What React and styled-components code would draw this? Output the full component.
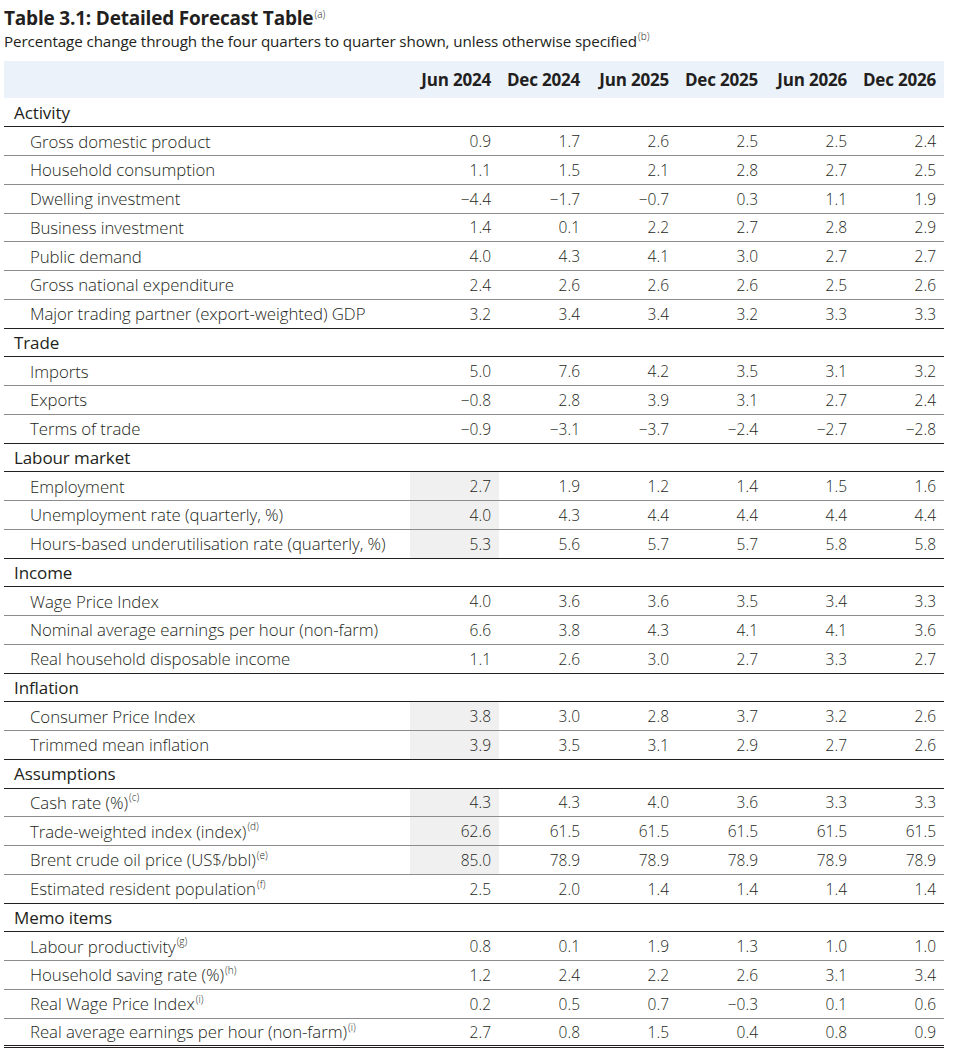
import React from "react";
import styled, { createGlobalStyle } from "styled-components";

const GlobalStyle = createGlobalStyle`
  body {
    margin: 0;
    background: #fff;
    font-family: "Open Sans", "Noto Sans", sans-serif;
    color: #231f20;
  }
`;

const Page = styled.div`
  padding: 5px 35px 0 4px;
`;

const Title = styled.h1`
  margin: 0;
  font-size: 19px;
  font-weight: 700;
  line-height: 26px;
  letter-spacing: -0.2px;
`;

const Subtitle = styled.p`
  margin: 0 0 10px;
  font-size: 15.2px;
  font-weight: 400;
  line-height: 20px;
  letter-spacing: -0.1px;
`;

const Note = styled.sup`
  font-size: 10px;
  font-weight: 300;
  line-height: 0;
  vertical-align: 0;
  position: relative;
  top: -0.75em;
  margin-left: 1px;
  letter-spacing: 0;
`;

const Grid = styled.table`
  width: 940px;
  border-collapse: collapse;
  table-layout: fixed;
`;

const HeadRow = styled.tr`
  background: #ebf2fa;
  height: 37px;
`;

const Th = styled.th`
  font-size: 17px;
  font-weight: 700;
  text-align: right;
  padding: 0 8px 0 0;
  letter-spacing: -0.2px;
  white-space: nowrap;
`;

const SectionRow = styled.tr`
  height: 28.75px;
  border-bottom: 1px solid #231f20;
`;

const SectionLabel = styled.td`
  font-size: 17px;
  font-weight: 400;
  padding: 0 0 0 10px;
  letter-spacing: -0.1px;
`;

const Row = styled.tr`
  height: 28.75px;
  border-bottom: ${(p) =>
    p.$last ? (p.$end ? "3px double #231f20" : "1px solid #231f20") : "1px solid #8c8c8c"};
`;

const Label = styled.td`
  font-size: 16.8px;
  font-weight: 300;
  padding: 0 0 0 26px;
  white-space: nowrap;
  letter-spacing: -0.05px;
`;

const Cell = styled.td`
  font-size: 15.5px;
  font-weight: 300;
  text-align: right;
  padding: 0 8px 0 0;
  background: ${(p) => (p.$shaded ? "#f0f0f0" : "transparent")};
`;

const columns = ["Jun 2024", "Dec 2024", "Jun 2025", "Dec 2025", "Jun 2026", "Dec 2026"];

const sections = [
  {
    name: "Activity",
    rows: [
      ["Gross domestic product", null, ["0.9", "1.7", "2.6", "2.5", "2.5", "2.4"]],
      ["Household consumption", null, ["1.1", "1.5", "2.1", "2.8", "2.7", "2.5"]],
      ["Dwelling investment", null, ["−4.4", "−1.7", "−0.7", "0.3", "1.1", "1.9"]],
      ["Business investment", null, ["1.4", "0.1", "2.2", "2.7", "2.8", "2.9"]],
      ["Public demand", null, ["4.0", "4.3", "4.1", "3.0", "2.7", "2.7"]],
      ["Gross national expenditure", null, ["2.4", "2.6", "2.6", "2.6", "2.5", "2.6"]],
      ["Major trading partner (export-weighted) GDP", null, ["3.2", "3.4", "3.4", "3.2", "3.3", "3.3"]],
    ],
  },
  {
    name: "Trade",
    rows: [
      ["Imports", null, ["5.0", "7.6", "4.2", "3.5", "3.1", "3.2"]],
      ["Exports", null, ["−0.8", "2.8", "3.9", "3.1", "2.7", "2.4"]],
      ["Terms of trade", null, ["−0.9", "−3.1", "−3.7", "−2.4", "−2.7", "−2.8"]],
    ],
  },
  {
    name: "Labour market",
    rows: [
      ["Employment", null, ["2.7", "1.9", "1.2", "1.4", "1.5", "1.6"], true],
      ["Unemployment rate (quarterly, %)", null, ["4.0", "4.3", "4.4", "4.4", "4.4", "4.4"], true],
      ["Hours-based underutilisation rate (quarterly, %)", null, ["5.3", "5.6", "5.7", "5.7", "5.8", "5.8"], true],
    ],
  },
  {
    name: "Income",
    rows: [
      ["Wage Price Index", null, ["4.0", "3.6", "3.6", "3.5", "3.4", "3.3"]],
      ["Nominal average earnings per hour (non-farm)", null, ["6.6", "3.8", "4.3", "4.1", "4.1", "3.6"]],
      ["Real household disposable income", null, ["1.1", "2.6", "3.0", "2.7", "3.3", "2.7"]],
    ],
  },
  {
    name: "Inflation",
    rows: [
      ["Consumer Price Index", null, ["3.8", "3.0", "2.8", "3.7", "3.2", "2.6"], true],
      ["Trimmed mean inflation", null, ["3.9", "3.5", "3.1", "2.9", "2.7", "2.6"], true],
    ],
  },
  {
    name: "Assumptions",
    rows: [
      ["Cash rate (%)", "c", ["4.3", "4.3", "4.0", "3.6", "3.3", "3.3"], true],
      ["Trade-weighted index (index)", "d", ["62.6", "61.5", "61.5", "61.5", "61.5", "61.5"], true],
      ["Brent crude oil price (US$/bbl)", "e", ["85.0", "78.9", "78.9", "78.9", "78.9", "78.9"], true],
      ["Estimated resident population", "f", ["2.5", "2.0", "1.4", "1.4", "1.4", "1.4"]],
    ],
  },
  {
    name: "Memo items",
    rows: [
      ["Labour productivity", "g", ["0.8", "0.1", "1.9", "1.3", "1.0", "1.0"]],
      ["Household saving rate (%)", "h", ["1.2", "2.4", "2.2", "2.6", "3.1", "3.4"]],
      ["Real Wage Price Index", "i", ["0.2", "0.5", "0.7", "−0.3", "0.1", "0.6"]],
      ["Real average earnings per hour (non-farm)", "i", ["2.7", "0.8", "1.5", "0.4", "0.8", "0.9"]],
    ],
  },
];

export default function App() {
  return (
    <Page>
      <GlobalStyle />
      <Title>
        Table 3.1: Detailed Forecast Table<Note>(a)</Note>
      </Title>
      <Subtitle>
        Percentage change through the four quarters to quarter shown, unless otherwise specified
        <Note>(b)</Note>
      </Subtitle>
      <Grid>
        <colgroup>
          <col style={{ width: 406 }} />
          {columns.map((c) => (
            <col key={c} style={{ width: 89 }} />
          ))}
        </colgroup>
        <thead>
          <HeadRow>
            <th />
            {columns.map((c) => (
              <Th key={c}>{c}</Th>
            ))}
          </HeadRow>
        </thead>
        <tbody>
          {sections.map((section, si) => (
            <React.Fragment key={section.name}>
              <SectionRow>
                <SectionLabel colSpan={7}>{section.name}</SectionLabel>
              </SectionRow>
              {section.rows.map(([label, note, values, shaded], ri) => (
                <Row
                  key={label}
                  $last={ri === section.rows.length - 1}
                  $end={si === sections.length - 1 && ri === section.rows.length - 1}
                >
                  <Label>
                    {label}
                    {note && <Note>({note})</Note>}
                  </Label>
                  {values.map((v, vi) => (
                    <Cell key={vi} $shaded={shaded && vi === 0}>
                      {v}
                    </Cell>
                  ))}
                </Row>
              ))}
            </React.Fragment>
          ))}
        </tbody>
      </Grid>
    </Page>
  );
}
